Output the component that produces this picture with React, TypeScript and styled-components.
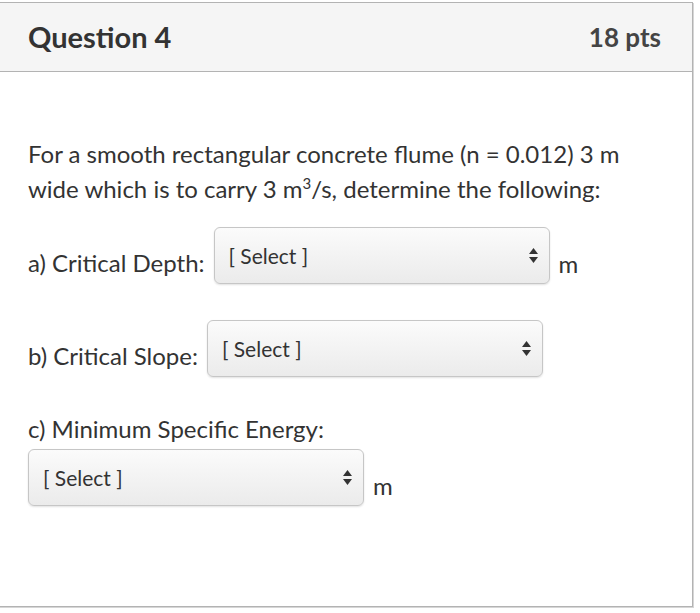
import React from 'react'
import styled, { createGlobalStyle } from 'styled-components'

const GlobalStyle = createGlobalStyle`
  html, body {
    margin: 0;
    padding: 0;
    background: #fff;
  }
  body {
    font-family: Lato, 'Liberation Sans', sans-serif;
    color: #333;
  }
`

const SelectBox = ({ children }: { children?: React.ReactNode }) => (
  <Select>
    <SelectText>{children ?? '[ Select ]'}</SelectText>
    <Arrows width="11" height="17" viewBox="0 0 11 17">
      <path d="M5.5 1 L10 7 L1 7 Z" fill="#333" />
      <path d="M5.5 16 L10 10 L1 10 Z" fill="#333" />
    </Arrows>
  </Select>
)

const App = () => {
  return (
    <Page>
      <GlobalStyle />
      <Card>
        <Header>
          <Title>Question 4</Title>
          <Points>18 pts</Points>
        </Header>
        <Body>
          <Text>
            For a smooth rectangular concrete flume (n = 0.012) 3 m wide which is to carry 3 m<sup>3</sup>/s,
            determine the following:
          </Text>
          <Row $top={21}>
            <Label>a) Critical Depth:</Label>
            <SelectBox />
            <Unit>m</Unit>
          </Row>
          <Row $top={36}>
            <Label>b) Critical Slope:</Label>
            <SelectBox />
          </Row>
          <Block>
            <BlockLabel>c) Minimum Specific Energy:</BlockLabel>
            <Row $top={0}>
              <SelectBox />
              <Unit>m</Unit>
            </Row>
          </Block>
        </Body>
      </Card>
    </Page>
  )
}

const Page = styled.div`
  padding-top: 2px;
  height: 613px;
  box-sizing: border-box;
  overflow: hidden;
`

const Card = styled.div`
  margin-left: -1px;
  width: 694px;
  height: 605px;
  box-sizing: border-box;
  border: 1px solid #b3b3b3;
  box-shadow: 1px 1px 0 #d6d6d6;
  background: #fff;
`

const Header = styled.div`
  display: flex;
  align-items: center;
  justify-content: space-between;
  height: 69px;
  box-sizing: border-box;
  padding: 0 31px 0 28px;
  background: #f5f5f5;
  border-bottom: 1px solid #b3b3b3;
`

const Title = styled.div`
  font-size: 29px;
  font-weight: 700;
  color: #333;
  margin-top: -2px;
`

const Points = styled.div`
  font-size: 26px;
  font-weight: 700;
  color: #444;
`

const Body = styled.div`
  padding: 64px 20px 0 28px;
`

const Text = styled.p`
  margin: 0;
  font-size: 24px;
  line-height: 35px;
  color: #333;

  sup {
    font-size: 15px;
    line-height: 0;
    vertical-align: 9px;
  }
`

const Row = styled.div<{ $top: number }>`
  display: flex;
  align-items: center;
  gap: 9px;
  margin-top: ${(p) => p.$top}px;
`

const Label = styled.span`
  font-size: 24px;
  color: #333;
  padding-top: 14px;
`

const Unit = styled.span`
  font-size: 24px;
  color: #333;
  padding-top: 16px;
`

const Block = styled.div`
  margin-top: 36px;
`

const BlockLabel = styled.div`
  font-size: 24px;
  line-height: 32px;
  color: #333;
  margin-bottom: 4px;
`

const Select = styled.div`
  display: flex;
  align-items: center;
  justify-content: space-between;
  width: 336px;
  height: 57px;
  box-sizing: border-box;
  padding: 0 10px 0 14px;
  border: 1px solid #c6c6c6;
  border-radius: 6px;
  background: linear-gradient(#fbfbfb, #ebebeb);
  box-shadow: 0 1px 2px rgba(0, 0, 0, 0.12);
`

const SelectText = styled.span`
  font-size: 21px;
  color: #333;
`

const Arrows = styled.svg`
  flex: none;
`

export default App
